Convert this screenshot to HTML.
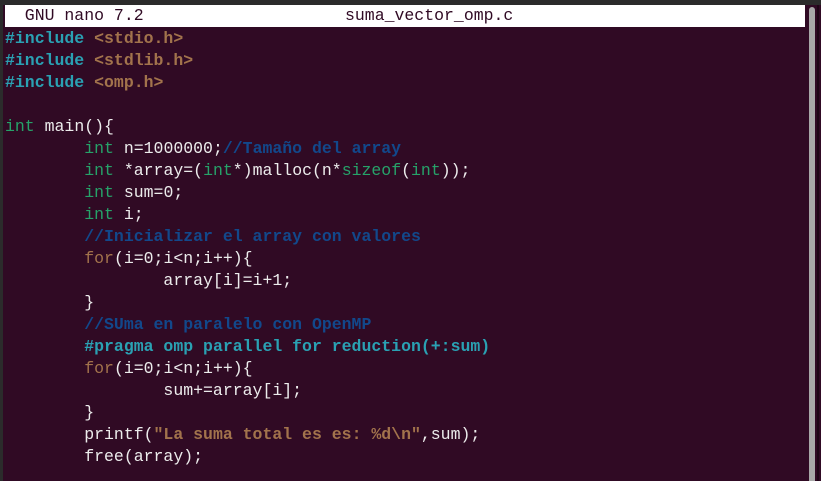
<!DOCTYPE html>
<html><head><meta charset="utf-8"><style>
html,body{margin:0;padding:0;width:821px;height:481px;overflow:hidden;background:#300a24;}
#top{position:absolute;left:0;top:0;width:821px;height:5px;background:#2b2b2b;}
#left{position:absolute;left:0;top:0;width:3px;height:481px;background:#2b2b2b;}
#title{position:absolute;left:5px;top:5px;width:800px;height:22px;background:#fff;color:#300a24;font:16.5px/22px "Liberation Mono",monospace;white-space:pre;}
#title .n{position:absolute;left:340px;top:0;}
#sb{position:absolute;left:809px;top:7px;width:6px;height:474px;background:#a8a8a8;border-radius:3px 3px 0 0;}
#edge{position:absolute;left:817px;top:5px;width:2px;height:476px;background:#1e0616;}
pre{position:absolute;left:5px;top:28px;margin:0;font:16.5px/22px "Liberation Mono",monospace;color:#ececec;letter-spacing:0;}
.p{color:#2aa1b3;font-weight:bold}
.s{color:#a2734c;font-weight:bold}
.t{color:#26a269}
.k{color:#a2734c}
.c{color:#12488b;font-weight:bold}
</style></head><body>
<div id="top"></div><div id="left"></div>
<div id="title">  GNU nano 7.2<span class="n">suma_vector_omp.c</span></div>
<div id="sb"></div><div id="edge"></div>
<pre><span class="p">#include</span> <span class="s">&lt;stdio.h&gt;</span>
<span class="p">#include</span> <span class="s">&lt;stdlib.h&gt;</span>
<span class="p">#include</span> <span class="s">&lt;omp.h&gt;</span>

<span class="t">int</span> main(){
        <span class="t">int</span> n=1000000;<span class="c">//Tamaño del array</span>
        <span class="t">int</span> *array=(<span class="t">int</span>*)malloc(n*<span class="t">sizeof</span>(<span class="t">int</span>));
        <span class="t">int</span> sum=0;
        <span class="t">int</span> i;
        <span class="c">//Inicializar el array con valores</span>
        <span class="k">for</span>(i=0;i&lt;n;i++){
                array[i]=i+1;
        }
        <span class="c">//SUma en paralelo con OpenMP</span>
        <span class="p">#pragma omp parallel for reduction(+:sum)</span>
        <span class="k">for</span>(i=0;i&lt;n;i++){
                sum+=array[i];
        }
        printf(<span class="s">"La suma total es es: %d\n"</span>,sum);
        free(array);
</pre>
</body></html>
